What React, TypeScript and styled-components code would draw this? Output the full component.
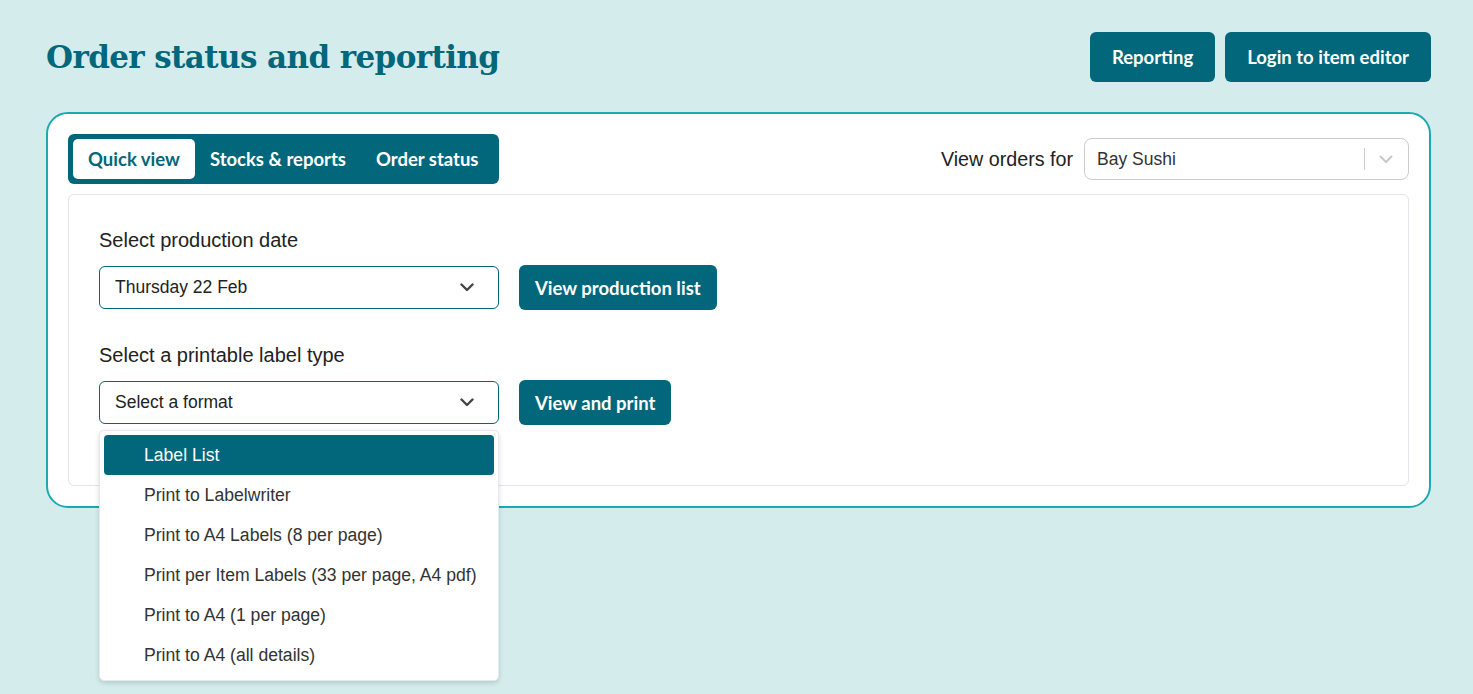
import React from 'react';
import styled, { createGlobalStyle } from 'styled-components';

const TEAL = '#02677a';

const GlobalStyle = createGlobalStyle`
  html, body {
    margin: 0;
    padding: 0;
    background: #d4ecec;
  }
  body {
    font-family: 'Liberation Sans', Arial, sans-serif;
    color: #222;
  }
  * { box-sizing: border-box; }
`;

const formats = [
  'Label List',
  'Print to Labelwriter',
  'Print to A4 Labels (8 per page)',
  'Print per Item Labels (33 per page, A4 pdf)',
  'Print to A4 (1 per page)',
  'Print to A4 (all details)',
];

function Chevron({ light }: { light?: boolean }) {
  return (
    <svg width="14" height="9" viewBox="0 0 14 9" fill="none">
      <path
        d="M1.5 1.5 L7 7 L12.5 1.5"
        stroke={light ? '#c8c8c8' : '#444'}
        strokeWidth={light ? 2 : 2.4}
        strokeLinecap="round"
        strokeLinejoin="round"
      />
    </svg>
  );
}

function App() {
  return (
    <Page>
      <GlobalStyle />
      <Header>
        <Title>Order status and reporting</Title>
        <HeaderActions>
          <Button $big>Reporting</Button>
          <Button $big>Login to item editor</Button>
        </HeaderActions>
      </Header>

      <Card>
        <TopRow>
          <Tabs>
            <Tab $active>Quick view</Tab>
            <Tab>Stocks &amp; reports</Tab>
            <Tab>Order status</Tab>
          </Tabs>
          <OrdersFor>
            <span>View orders for</span>
            <CustomerSelect>
              <span>Bay Sushi</span>
              <Indicators>
                <Separator />
                <Chevron light />
              </Indicators>
            </CustomerSelect>
          </OrdersFor>
        </TopRow>

        <Panel>
          <Field>
            <Label>Select production date</Label>
            <FieldRow>
              <Select>
                <span>Thursday 22 Feb</span>
                <Chevron />
              </Select>
              <Button>View production list</Button>
            </FieldRow>
          </Field>

          <Field>
            <Label>Select a printable label type</Label>
            <FieldRow>
              <SelectWrap>
                <Select>
                  <span>Select a format</span>
                  <Chevron />
                </Select>
                <Menu>
                  {formats.map((f, i) => (
                    <MenuItem key={f} $active={i === 0}>
                      {f}
                    </MenuItem>
                  ))}
                </Menu>
              </SelectWrap>
              <Button>View and print</Button>
            </FieldRow>
          </Field>
        </Panel>
      </Card>
    </Page>
  );
}
export default App;

const Page = styled.div`
  min-height: 100vh;
  padding: 32px 42px 0 46px;
`;

const Header = styled.div`
  display: flex;
  justify-content: space-between;
  align-items: center;
  height: 50px;
  margin-bottom: 30px;
`;

const Title = styled.h1`
  margin: 0;
  font-family: 'DejaVu Serif', serif;
  font-weight: 700;
  font-size: 31px;
  letter-spacing: -0.6px;
  color: ${TEAL};
`;

const HeaderActions = styled.div`
  display: flex;
  gap: 10px;
`;

const Button = styled.button<{ $big?: boolean }>`
  border: none;
  background: ${TEAL};
  color: #fff;
  font-family: Lato, sans-serif;
  font-weight: 700;
  font-size: 18.5px;
  border-radius: 6px;
  height: ${(p) => (p.$big ? '50px' : '45px')};
  padding: 0 ${(p) => (p.$big ? '22px' : '16px')};
  cursor: pointer;
  white-space: nowrap;
`;

const Card = styled.div`
  background: #fff;
  border: 2px solid #1ba9b2;
  border-radius: 22px;
  padding: 20px;
`;

const TopRow = styled.div`
  display: flex;
  justify-content: space-between;
  align-items: center;
  margin-bottom: 10px;
`;

const Tabs = styled.div`
  display: flex;
  background: ${TEAL};
  border-radius: 6px;
  padding: 5px;
  height: 50px;
`;

const Tab = styled.div<{ $active?: boolean }>`
  display: flex;
  align-items: center;
  padding: 0 15px;
  border-radius: 5px;
  font-family: Lato, sans-serif;
  font-weight: 700;
  font-size: 18.5px;
  background: ${(p) => (p.$active ? '#fff' : 'transparent')};
  color: ${(p) => (p.$active ? TEAL : '#fff')};
`;

const OrdersFor = styled.div`
  display: flex;
  align-items: center;
  gap: 11px;
  font-size: 19.7px;
  color: #222;
`;

const CustomerSelect = styled.div`
  width: 325px;
  height: 42px;
  border: 1px solid #cccccc;
  border-radius: 8px;
  display: flex;
  align-items: center;
  justify-content: space-between;
  padding: 0 15px 0 12px;
  font-size: 17.5px;
  color: #333;
`;

const Indicators = styled.div`
  display: flex;
  align-items: center;
  gap: 14px;
`;

const Separator = styled.div`
  width: 1px;
  height: 22px;
  background: #cccccc;
`;

const Panel = styled.div`
  border: 1px solid #e1e5eb;
  border-radius: 6px;
  padding: 34px 30px 60px 30px;
  display: flex;
  flex-direction: column;
  gap: 34px;
`;

const Field = styled.div`
  display: flex;
  flex-direction: column;
  gap: 13px;
`;

const Label = styled.div`
  font-size: 20px;
  color: #222;
`;

const FieldRow = styled.div`
  display: flex;
  align-items: center;
  gap: 20px;
`;

const SelectWrap = styled.div`
  position: relative;
`;

const Select = styled.div`
  width: 400px;
  height: 43px;
  border: 1px solid ${TEAL};
  border-radius: 6px;
  display: flex;
  align-items: center;
  justify-content: space-between;
  padding: 0 24px 0 15px;
  font-size: 17.5px;
  color: #222;
`;

const Menu = styled.div`
  position: absolute;
  top: 49px;
  left: 0;
  width: 400px;
  background: #fff;
  border: 1px solid #e6e9ee;
  border-radius: 5px;
  box-shadow: 0 2px 5px rgba(0, 0, 0, 0.15);
  padding: 4px 4px 5px;
  z-index: 10;
`;

const MenuItem = styled.div<{ $active?: boolean }>`
  height: 40px;
  display: flex;
  align-items: center;
  padding-left: 40px;
  border-radius: 4px;
  font-size: 17.6px;
  background: ${(p) => (p.$active ? TEAL : 'transparent')};
  color: ${(p) => (p.$active ? '#fff' : '#333')};
`;
